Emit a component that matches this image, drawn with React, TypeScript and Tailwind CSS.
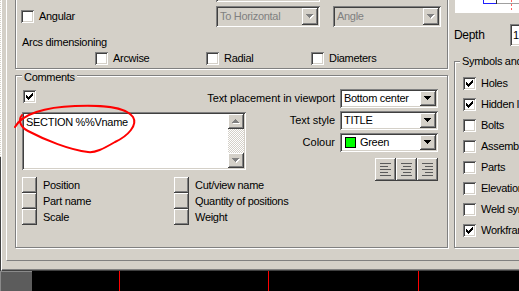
import React from "react";

const SUNKEN =
  "shadow-[inset_1px_1px_0_#808080,inset_-1px_-1px_0_#ffffff,inset_2px_2px_0_#404040,inset_-2px_-2px_0_#d4d0c8]";
const RAISED =
  "shadow-[inset_-1px_-1px_0_#404040,inset_1px_1px_0_#ffffff,inset_-2px_-2px_0_#808080]";
const ETCHED =
  "border border-[#808080] shadow-[inset_1px_1px_0_#ffffff,1px_1px_0_#ffffff]";
const CHECKER =
  "bg-[repeating-conic-gradient(#ffffff_0%_25%,#d4d0c8_0%_50%)] bg-[length:2px_2px]";

function Arrow({ up = false, disabled = false }: { up?: boolean; disabled?: boolean }) {
  const d = up
    ? "M3 0h1v1H3z M2 1h3v1H2z M1 2h5v1H1z M0 3h7v1H0z"
    : "M0 0h7v1H0z M1 1h5v1H1z M2 2h3v1H2z M3 3h1v1H3z";
  return (
    <svg width="8" height="5" viewBox="0 0 8 5" shapeRendering="crispEdges">
      {disabled && <path d={d} fill="#ffffff" transform="translate(1,1)" />}
      <path d={d} fill={disabled ? "#808080" : "#000000"} />
    </svg>
  );
}

function CheckBox({ checked = false }: { checked?: boolean }) {
  return (
    <div
      className={`w-[13px] h-[13px] shrink-0 bg-white ${SUNKEN} flex items-center justify-center`}
    >
      {checked && (
        <svg width="7" height="7" viewBox="0 0 7 7" shapeRendering="crispEdges">
          <path
            d="M6 0h1v1h-1z M5 1h2v1h-2z M0 2h1v1H0z M4 2h3v1H4z M0 3h2v1H0z M3 3h3v1H3z M0 4h5v1H0z M1 5h3v1H1z M2 6h1v1H2z"
            fill="#000000"
          />
        </svg>
      )}
    </div>
  );
}

function Combo({
  text,
  className,
  disabled = false,
  swatch = false,
}: {
  text: string;
  className: string;
  disabled?: boolean;
  swatch?: boolean;
}) {
  return (
    <div
      className={`flex items-stretch p-[2px] shrink-0 ${SUNKEN} ${
        disabled ? "bg-[#d4d0c8]" : "bg-white"
      } ${className}`}
    >
      <div
        className={`flex-1 flex items-center gap-[4px] pl-[2px] overflow-hidden whitespace-nowrap ${
          disabled ? "text-[#808080]" : "text-black"
        }`}
      >
        {swatch && <span className="ml-[1px] w-[11px] h-[11px] bg-[#00ff00] border border-black" />}
        {text}
      </div>
      <div className={`w-[16px] bg-[#d4d0c8] ${RAISED} flex items-center justify-center`}>
        <Arrow disabled={disabled} />
      </div>
    </div>
  );
}

function AlignIcon({ kind }: { kind: "left" | "center" | "right" }) {
  const lens = [11, 8, 11, 8, 11];
  return (
    <svg width="11" height="13" viewBox="0 0 11 13" shapeRendering="crispEdges">
      {lens.map((l, i) => {
        const x = kind === "left" ? 0 : kind === "right" ? 11 - l : (11 - l) / 2;
        return <rect key={i} x={Math.round(x)} y={i * 3} width={l} height={1} fill="#5a5a5a" />;
      })}
    </svg>
  );
}

function SmallButton({ label }: { label: string }) {
  return (
    <div className="h-[16px] flex items-center">
      <div className={`w-[15px] h-[16px] shrink-0 bg-[#d4d0c8] ${RAISED}`} />
      <span className="ml-[6px] whitespace-nowrap">{label}</span>
    </div>
  );
}

export default function App() {
  return (
    <div className="relative w-[519px] h-[291px] overflow-hidden flex flex-col bg-[#d4d0c8] font-['Liberation_Sans',Arial,sans-serif] text-[11px] tracking-[-0.3px] leading-none text-black">
      <div className="flex h-[271px] shrink-0">
        {/* left splitter strip */}
        <div className="w-[1px] flex flex-col shrink-0">
          <div className={`h-[157px] ${CHECKER}`} />
          <div className="flex-1 bg-[#404040]" />
        </div>

        {/* dialog */}
        <div className="flex-1 flex flex-col border-l border-white border-b border-b-[#404040] shadow-[inset_0_-1px_0_#808080] pl-[4px]">
          <div className="h-[261px] flex border-l border-white border-b border-b-[#808080] pl-[8px]">
            {/* left column */}
            <div className="w-[433px] shrink-0 flex flex-col">
              {/* top group (arcs) */}
              <div className={`-mt-[30px] h-[99px] shrink-0 flex flex-col ${ETCHED}`}>
                <div className="mt-[10px] h-[21px] flex pl-[200px]">
                  <Combo text="" className="w-[104px] h-[21px]" disabled />
                </div>
                <div className="mt-[4px] h-[21px] flex items-center pl-[5px]">
                  <div className="w-[195px] flex items-center gap-[5px]">
                    <CheckBox />
                    <span>Angular</span>
                  </div>
                  <Combo text="To Horizontal" className="w-[104px] h-[21px]" disabled />
                  <Combo text="Angle" className="ml-[13px] w-[108px] h-[21px]" disabled />
                </div>
                <div className="mt-[9px] h-[13px] flex items-center pl-[6px]">Arcs dimensioning</div>
                <div className="mt-[3px] h-[13px] flex items-center pl-[79px]">
                  <div className="w-[111px] flex items-center gap-[5px]">
                    <CheckBox />
                    <span>Arcwise</span>
                  </div>
                  <div className="w-[105px] flex items-center gap-[5px]">
                    <CheckBox />
                    <span>Radial</span>
                  </div>
                  <div className="flex items-center gap-[5px]">
                    <CheckBox />
                    <span>Diameters</span>
                  </div>
                </div>
              </div>

              {/* comments group */}
              <div className={`mt-[6px] h-[173px] shrink-0 flex flex-col ${ETCHED}`}>
                <div className="-mt-[5px] ml-[6px] self-start px-[2px] h-[13px] flex items-center bg-[#d4d0c8]">
                  Comments
                </div>
                <div className="mt-[5px] h-[19px] flex items-start pl-[7px] pr-[9px]">
                  <div className="mt-[1px]">
                    <CheckBox checked />
                  </div>
                  <div className="ml-auto flex items-center gap-[5px]">
                    <span className="whitespace-nowrap tracking-[-0.07px]">Text placement in viewport</span>
                    <Combo text="Bottom center" className="w-[98px] h-[19px]" />
                  </div>
                </div>
                <div className="mt-[3px] flex items-start pr-[9px]">
                  <div className="pl-[6px] flex flex-col">
                    <div className={`mt-[1px] w-[224px] h-[58px] bg-white ${SUNKEN} p-[2px] flex`}>
                      <div className="flex-1 pl-[2px] pt-[3px] whitespace-nowrap">SECTION %%Vname</div>
                      <div className="w-[16px] flex flex-col">
                        <div className={`h-[15px] bg-[#d4d0c8] ${RAISED} flex items-center justify-center`}>
                          <Arrow up disabled />
                        </div>
                        <div className={`flex-1 ${CHECKER}`} />
                        <div className={`h-[15px] bg-[#d4d0c8] ${RAISED} flex items-center justify-center`}>
                          <Arrow disabled />
                        </div>
                      </div>
                    </div>
                    <div className="mt-[7px] flex">
                      <div className="w-[152px] flex flex-col">
                        <SmallButton label="Position" />
                        <SmallButton label="Part name" />
                        <SmallButton label="Scale" />
                      </div>
                      <div className="flex flex-col">
                        <SmallButton label="Cut/view name" />
                        <SmallButton label="Quantity of positions" />
                        <SmallButton label="Weight" />
                      </div>
                    </div>
                  </div>
                  <div className="ml-auto flex flex-col items-end">
                    <div className="h-[19px] flex items-center gap-[5px]">
                      <span className="tracking-[-0.07px]">Text style</span>
                      <Combo text="TITLE" className="w-[98px] h-[19px]" />
                    </div>
                    <div className="mt-[3px] h-[19px] flex items-center gap-[5px]">
                      <span className="tracking-[0px]">Colour</span>
                      <Combo text="Green" className="w-[98px] h-[19px]" swatch />
                    </div>
                    <div className="mt-[6px] flex">
                      {(["left", "center", "right"] as const).map((k) => (
                        <div
                          key={k}
                          className={`w-[21px] h-[23px] bg-[#d4d0c8] ${RAISED} flex items-center justify-center`}
                        >
                          <AlignIcon kind={k} />
                        </div>
                      ))}
                    </div>
                  </div>
                </div>
              </div>
            </div>

            {/* right column */}
            <div className="ml-[6px] flex-1 flex flex-col -mr-[20px]">
              <div className="ml-[1px] h-[13px] bg-white shrink-0">
                <svg width="64" height="13" viewBox="0 0 64 13" shapeRendering="crispEdges">
                  <rect x="28" y="0" width="1" height="4" fill="#2020ff" />
                  <rect x="28" y="3" width="13" height="1" fill="#2020ff" />
                  <rect x="41" y="0" width="1" height="4" fill="#303030" />
                  <rect x="42" y="3" width="22" height="1" fill="#a0a0a0" />
                  <rect x="56" y="0" width="1" height="2" fill="#ff6060" />
                  <rect x="56" y="4" width="1" height="2" fill="#ff6060" />
                  <rect x="56" y="8" width="1" height="2" fill="#ff6060" />
                </svg>
              </div>
              <div className="mt-[11px] h-[22px] flex items-center shrink-0">
                <span className="w-[56px] shrink-0 text-[12px]">Depth</span>
                <div className={`flex-1 h-[22px] bg-white ${SUNKEN} pl-[3px] flex items-center`}>1</div>
              </div>
              <div className={`mt-[15px] h-[187px] shrink-0 flex flex-col ${ETCHED}`}>
                <div className="-mt-[7px] ml-[5px] self-start px-[2px] h-[13px] flex items-center bg-[#d4d0c8] whitespace-nowrap">
                  Symbols and marks
                </div>
                <div className="mt-[9px] flex flex-col gap-[8px] pl-[8px]">
                  {[
                    ["Holes", true],
                    ["Hidden lines", true],
                    ["Bolts", false],
                    ["Assemblies", false],
                    ["Parts", false],
                    ["Elevations", false],
                    ["Weld symbols", false],
                    ["Workframe", true],
                  ].map(([label, checked]) => (
                    <div key={label as string} className="h-[13px] flex items-center gap-[5px] whitespace-nowrap">
                      <CheckBox checked={checked as boolean} />
                      <span>{label as string}</span>
                    </div>
                  ))}
                </div>
              </div>
            </div>
          </div>
        </div>
      </div>

      {/* bottom black strip */}
      <div className="h-[20px] flex bg-black shrink-0">
        <div className="w-[32px] bg-[#5c5c5c] border-l border-t border-[#8a8a8a]" />
        <div className="w-[87px]" />
        <div className="w-[1px] bg-[#ff0000]" />
        <div className="w-[148px]" />
        <div className="w-[1px] bg-[#ff0000]" />
        <div className="w-[149px]" />
        <div className="w-[1px] bg-[#ff0000]" />
      </div>

      {/* red freehand annotation */}
      <svg
        className="absolute left-0 top-0 pointer-events-none"
        width="519"
        height="291"
        viewBox="0 0 519 291"
      >
        <path
          d="M15 127 C22 114, 45 107, 75 106 C100 105, 125 106, 133 117 C138 125, 128 136, 115 142 C103 149, 95 153, 88 152 C70 150, 45 140, 28 131 C20 127, 18 120, 22 115"
          fill="none"
          stroke="#ff0000"
          strokeWidth="2"
          strokeLinecap="round"
        />
      </svg>
    </div>
  );
}
